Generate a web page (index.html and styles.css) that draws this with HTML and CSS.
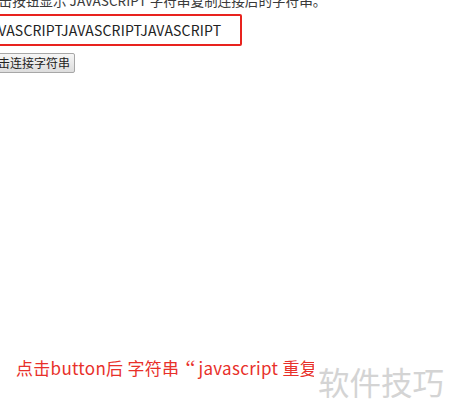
FILE: index.html
```html
<!DOCTYPE html>
<html lang="zh">
<head>
<meta charset="utf-8">
<link rel="stylesheet" href="styles.css">
</head>
<body>
<div class="page">
  <p class="intro">点击按钮显示 JAVASCRIPT 字符串复制连接后的字符串。</p>
  <div class="output">JAVASCRIPTJAVASCRIPTJAVASCRIPT</div>
  <button class="btn">点击连接字符串</button>
</div>
<div class="caption">
  <p class="note">点击button后 字符串<span class="quote">“</span>javascript 重复连接三次</p>
  <div class="watermark">软件技巧</div>
</div>
</body>
</html>
```
FILE: styles.css
```css
html, body {
  margin: 0;
  padding: 0;
  background: #ffffff;
}
body {
  width: 450px;
  height: 418px;
  overflow: hidden;
  font-family: "Noto Sans CJK SC", "Noto Sans", sans-serif;
  color: #333333;
}
.page {
  margin: -9px 0 0 -15px;
  display: flex;
  flex-direction: column;
  align-items: flex-start;
}
.intro {
  margin: 0;
  font-size: 13.6px;
  line-height: 18px;
  color: #3a3a3a;
  white-space: nowrap;
}
.output {
  margin-top: 5px;
  margin-left: -12px;
  width: 258px;
  height: 28px;
  padding-left: 7px;
  border: 2px solid #e8231e;
  border-radius: 2px;
  font-size: 14px;
  letter-spacing: 0.18px;
  line-height: 28px;
  color: #222222;
  white-space: nowrap;
}
.btn {
  margin-top: 7px;
  margin-left: -4px;
  height: 20px;
  padding: 0 4px;
  font-family: "Noto Sans CJK SC", sans-serif;
  font-size: 12px;
  line-height: 16px;
  color: #222222;
  background: linear-gradient(#f6f6f6, #dddddd);
  border: 1px solid #a7a7a7;
  border-radius: 2px;
}
.caption {
  position: relative;
  margin-top: 284px;
  height: 70px;
}
.note {
  margin: 0 0 0 16px;
  font-size: 17px;
  letter-spacing: 0.3px;
  line-height: 22px;
  color: #e8302a;
  white-space: nowrap;
}
.quote {
  font-family: "Liberation Serif", serif;
  font-size: 22px;
  line-height: 18px;
  margin: 0 3px 0 6px;
}
.watermark {
  position: absolute;
  left: 314px;
  top: -4px;
  width: 136px;
  height: 74px;
  padding: 8px 0 0 4px;
  box-sizing: border-box;
  background: #ffffff;
  font-size: 31.5px;
  line-height: 40px;
  color: #d4d4d4;
  white-space: nowrap;
}
```
